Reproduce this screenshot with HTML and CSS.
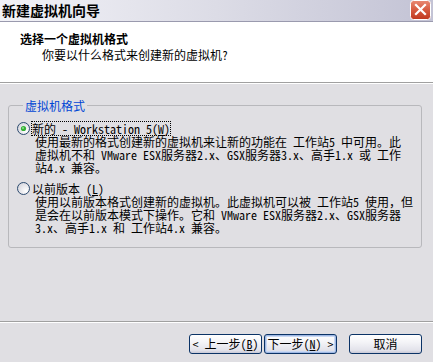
FILE: index.html
```html
<!DOCTYPE html>
<html lang="zh-CN">
<head>
<meta charset="utf-8">
<title>新建虚拟机向导</title>
<link rel="stylesheet" href="styles.css">
</head>
<body>
<div class="window">
  <div class="titlebar">
    <span class="title">新建虚拟机向导</span>
    <span class="close">
      <svg width="21" height="20" viewBox="0 0 21 20">
        <defs>
          <linearGradient id="cg" x1="0" y1="0" x2="0" y2="1">
            <stop offset="0" stop-color="#e98a74"/>
            <stop offset="0.5" stop-color="#d65a3f"/>
            <stop offset="1" stop-color="#c0391f"/>
          </linearGradient>
        </defs>
        <rect x="0.5" y="0.5" width="20" height="19" rx="3" fill="url(#cg)" stroke="#ffffff"/>
        <path d="M6 5 L15 14 M15 5 L6 14" stroke="#ffffff" stroke-width="2.2" stroke-linecap="square"/>
      </svg>
    </span>
  </div>
  <div class="header">
    <div class="h-title">选择一个虚拟机格式</div>
    <div class="h-sub">你要以什么格式来创建新的虚拟机?</div>
  </div>
  <div class="main">
    <fieldset class="group">
      <legend class="legend">虚拟机格式</legend>
      <div class="option">
        <div class="opt-row">
          <svg class="radio" width="13" height="13" viewBox="0 0 13 13">
            <defs>
              <radialGradient id="rg" cx="0.7" cy="0.7" r="0.8">
                <stop offset="0" stop-color="#ffffff"/>
                <stop offset="1" stop-color="#d4d4dc"/>
              </radialGradient>
            </defs>
            <circle cx="6.5" cy="6.5" r="6" fill="url(#rg)" stroke="#2c4a6e"/>
            <circle cx="6.5" cy="6.5" r="2.6" fill="#35b035"/>
            <circle cx="6" cy="6" r="1" fill="#8fe08f"/>
          </svg>
          <span class="opt-label focus">新的 - Workstation 5(<u>W</u>)</span>
        </div>
        <div class="desc">使用最新的格式创建新的虚拟机来让新的功能在 工作站5 中可用。此<br>虚拟机不和 VMware ESX服务器2.x、GSX服务器3.x、高手1.x 或 工作<br>站4.x 兼容。</div>
      </div>
      <div class="option second">
        <div class="opt-row">
          <svg class="radio" width="13" height="13" viewBox="0 0 13 13">
            <circle cx="6.5" cy="6.5" r="6" fill="url(#rg)" stroke="#2c4a6e"/>
          </svg>
          <span class="opt-label">以前版本 (<u>L</u>)</span>
        </div>
        <div class="desc">使用以前版本格式创建新的虚拟机。此虚拟机可以被 工作站5 使用，但<br>是会在以前版本模式下操作。它和 VMware ESX服务器2.x、GSX服务器<br>3.x、高手1.x 和 工作站4.x 兼容。</div>
      </div>
    </fieldset>
  </div>
  <div class="footer">
    <button class="btn">&lt; 上一步(<u>B</u>)</button>
    <button class="btn default">下一步(<u>N</u>) &gt;</button>
    <button class="btn cancel">取消</button>
  </div>
</div>
</body>
</html>
```

FILE: styles.css
```css
* { box-sizing: border-box; }
html, body { margin: 0; padding: 0; }
body {
  width: 433px;
  height: 362px;
  overflow: hidden;
  font-family: "Noto Sans Mono CJK SC", "Noto Sans CJK SC", monospace;
  font-size: 12px;
  color: #000;
  background: #e0dfe3;
}
.window {
  width: 433px;
  height: 362px;
  display: flex;
  flex-direction: column;
  background: #e0dfe3;
}
.titlebar {
  height: 22px;
  flex: none;
  display: flex;
  align-items: flex-start;
  justify-content: space-between;
  background: linear-gradient(to right, #f2f2f7 0%, #dcdce6 50%, #c3c3d5 100%);
  border-bottom: 1px solid #9a9aae;
  padding-left: 2px;
  padding-right: 2px;
}
.title {
  font-family: "Noto Sans CJK SC", sans-serif;
  font-weight: bold;
  font-size: 14px;
  line-height: 20px;
  color: #000;
}
.close { display: block; width: 21px; height: 20px; }
.close svg { display: block; }
.header {
  height: 61px;
  flex: none;
  background: #ffffff;
  border-bottom: 1px solid #a0a0a0;
  box-shadow: 0 1px 0 #ffffff;
  padding-top: 10px;
  margin-bottom: 1px;
}
.h-title {
  padding-left: 20px;
  font-weight: bold;
  line-height: 14px;
}
.h-sub {
  padding-left: 42px;
  margin-top: 2px;
  line-height: 14px;
}
.main {
  flex: 1;
  padding: 15px 11px 0 8px;
}
.group {
  margin: 0;
  padding: 10px 8px 13px 8px;
  border: 1px solid #b8b8bc;
  border-radius: 3px;
  min-width: 0;
}
.legend {
  color: #0046d5;
  padding: 0 2px;
  margin-left: 6px;
  line-height: 13px;
}
.option.second { margin-top: 8px; }
.opt-row {
  display: flex;
  align-items: center;
  height: 13px;
}
.radio { display: block; flex: none; }
.opt-label {
  margin-left: 2px;
  line-height: 13px;
  white-space: nowrap;
}
.focus { outline: 1px dotted #000; outline-offset: 0; }
.desc {
  margin-left: 18px;
  line-height: 13px;
  white-space: nowrap;
}
.footer {
  flex: none;
  height: 41px;
  border-top: 1px solid #a0a0a0;
  box-shadow: inset 0 1px 0 #ffffff;
  display: flex;
  align-items: flex-start;
  justify-content: flex-end;
  padding: 12px 11px 0 0;
  gap: 2px;
}
.btn {
  width: 73px;
  height: 20px;
  padding: 0;
  margin: 0;
  font-family: "Noto Sans Mono CJK SC", "Noto Sans CJK SC", monospace;
  font-size: 12px;
  line-height: 16px;
  color: #000;
  border: 1px solid #0b3366;
  border-radius: 3px;
  background: linear-gradient(to bottom, #ffffff 0%, #f2f2f6 45%, #e2e2ea 85%, #c8c8d6 100%);
}
.btn.default {
  box-shadow: inset 0 0 0 1px #9fb8e4, inset 0 0 0 2px #c9d8f2;
}
.btn.cancel { margin-left: 10px; }
```
